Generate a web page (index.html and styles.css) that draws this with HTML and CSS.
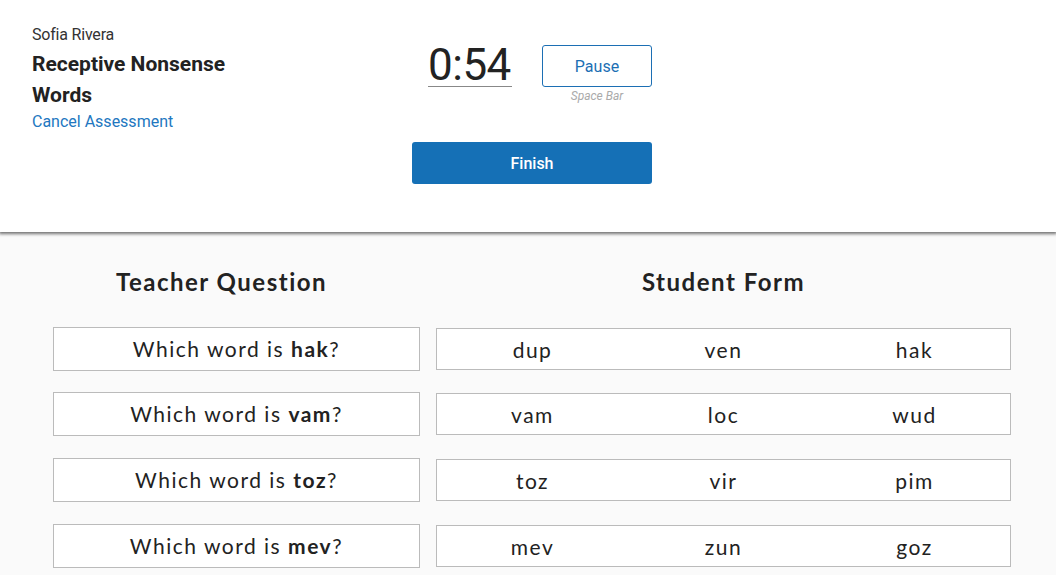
FILE: index.html
```html
<!DOCTYPE html>
<html>
<head>
<meta charset="utf-8">
<link rel="stylesheet" href="styles.css">
</head>
<body>
<header class="top">
  <div class="info">
    <div class="student">Sofia Rivera</div>
    <div class="title">Receptive Nonsense Words</div>
    <a class="cancel" href="#">Cancel Assessment</a>
  </div>
  <div class="controls">
    <div class="timer-row">
      <div class="timer">0:54</div>
      <div class="pause-wrap">
        <button class="pause">Pause</button>
        <div class="hint">Space Bar</div>
      </div>
    </div>
    <button class="finish">Finish</button>
  </div>
</header>
<main class="body">
  <section class="col left">
    <h2 class="head head-left">Teacher Question</h2>
    <div class="q">Which word is <b>hak</b>?</div>
    <div class="q">Which word is <b>vam</b>?</div>
    <div class="q">Which word is <b>toz</b>?</div>
    <div class="q">Which word is <b>mev</b>?</div>
  </section>
  <section class="col right">
    <h2 class="head">Student Form</h2>
    <div class="opts"><span>dup</span><span>ven</span><span>hak</span></div>
    <div class="opts"><span>vam</span><span>loc</span><span>wud</span></div>
    <div class="opts"><span>toz</span><span>vir</span><span>pim</span></div>
    <div class="opts"><span>mev</span><span>zun</span><span>goz</span></div>
  </section>
</main>
</body>
</html>
```
FILE: styles.css
```css
* { box-sizing: border-box; }
html, body { margin: 0; padding: 0; }
body {
  width: 1056px;
  height: 575px;
  overflow: hidden;
  background: #fafafa;
  font-family: Roboto, "Liberation Sans", sans-serif;
}
.top {
  height: 232px;
  background: #fff;
  display: flex;
  padding: 26px 0 0 32px;
  box-shadow: 0 1px 3px 1px rgba(0,0,0,0.55);
  position: relative;
  z-index: 1;
}
.info { width: 210px; }
.student { font-size: 16px; color: #333; line-height: 18px; letter-spacing: -0.2px; }
.title {
  font-size: 21px; font-weight: 700; color: #222;
  line-height: 31px; margin-top: 5px;
}
.cancel {
  display: block;
  font-size: 16px; color: #2277c0; text-decoration: none;
  line-height: 18px; margin-top: 2px;
}
.controls {
  margin-left: 170px;
  width: 240px;
  display: flex;
  flex-direction: column;
}
.timer-row {
  display: flex;
  justify-content: space-between;
  padding-left: 16px;
  margin-top: 19px;
}
.timer {
  font-size: 44px;
  font-weight: 400;
  color: #222;
  line-height: 40px;
  height: 42px;
  border-bottom: 1px solid #888;
  width: 84px;
  letter-spacing: -0.5px;
}
.pause-wrap { display: flex; flex-direction: column; align-items: center; }
.pause {
  width: 110px; height: 42px;
  border: 1px solid #1c6fb4;
  border-radius: 3px;
  background: #fff;
  color: #1c6fb4;
  font-family: Roboto, sans-serif;
  font-size: 16px;
}
.hint {
  font-size: 12px; font-style: italic; color: #aaa;
  line-height: 14px; margin-top: 2px;
}
.finish {
  margin-top: 39px;
  width: 240px; height: 42px;
  background: #1570b6;
  color: #fff;
  border: 0;
  border-radius: 3px;
  font-family: Roboto, sans-serif;
  font-size: 16px;
  font-weight: 500;
}
.body {
  display: flex;
  gap: 16px;
  padding: 34px 0 0 53px;
  font-family: Lato, "Open Sans", sans-serif;
  color: #222;
}
.col { display: flex; flex-direction: column; gap: 21.7px; }
.left { width: 367px; }
.right { width: 575px; }
.head {
  margin: 0 0 2px 0;
  text-align: center;
  font-size: 24px;
  font-weight: 700;
  letter-spacing: 1.5px;
  line-height: 32px;
  height: 37px;
}
.head-left { padding-right: 30px; }
.q {
  height: 44px;
  background: #fff;
  border: 1px solid #bbb;
  text-align: center;
  font-size: 21px;
  line-height: 41px;
  letter-spacing: 1.5px;
}
.q b { font-weight: 700; }
.opts {
  height: 42px;
  margin: 1px 0;
  background: #fff;
  border: 1px solid #bbb;
  display: grid;
  grid-template-columns: 1fr 1fr 1fr;
  text-align: center;
  font-size: 21px;
  line-height: 41px;
  letter-spacing: 1.5px;
}
```
